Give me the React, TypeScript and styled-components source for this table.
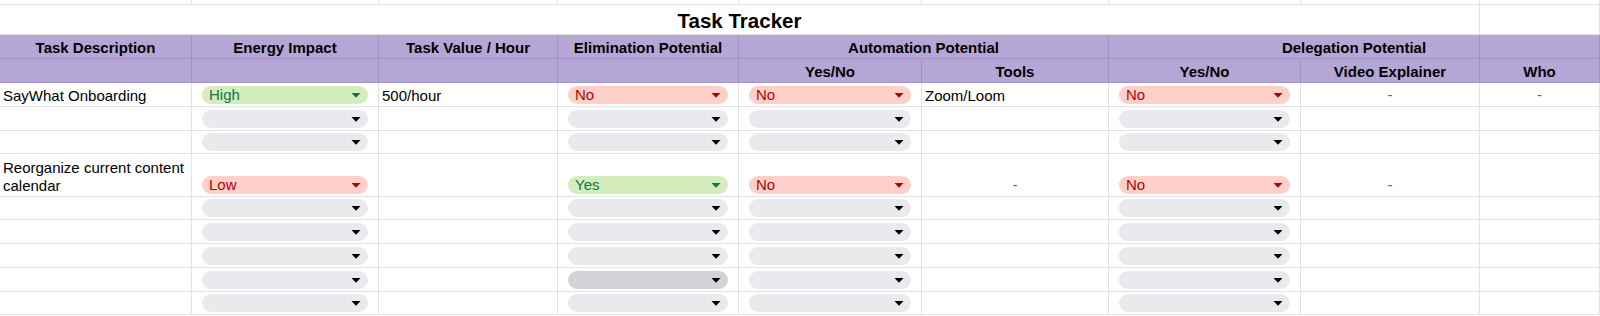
import React from 'react';
import styled, { createGlobalStyle, css } from 'styled-components';

type Tone = 'green' | 'red' | 'gray' | 'hover';
type Kind = 'blank' | 'title' | 'head' | 'data' | 'dash' | 'chip';

type CellData = {
  text?: string;
  chip?: Tone;
  dash?: boolean;
};

const Global = createGlobalStyle`
  html, body { margin: 0; padding: 0; background: #fff; }
  body { font-family: "Liberation Sans", Arial, sans-serif; }
`;

const widths = [192, 187, 179, 181, 183, 187, 192, 179];
const rowHeights = [5, 30, 24, 24, 24, 24, 23, 43, 23, 24, 24, 24, 23];

const Sheet = styled.div`
  display: grid;
  grid-template-columns: ${widths.map(w => `${w}px`).join(' ')} 1fr;
  grid-template-rows: ${rowHeights.map(h => `${h}px`).join(' ')};
  width: 1600px;
  overflow: hidden;
`;

const tones = {
  green: { bg: '#d4edbc', fg: '#11734b' },
  red: { bg: '#ffcfc9', fg: '#b10202' },
  gray: { bg: '#e8eaed', fg: '#000' },
  hover: { bg: '#d1d3d7', fg: '#000' },
};

const Cell = styled.div<{ $kind: Kind; $span?: number; $center?: boolean; $splitAt?: number }>`
  box-sizing: border-box;
  min-width: 0;
  display: flex;
  align-items: flex-end;
  justify-content: ${p => (p.$center ? 'center' : 'flex-start')};
  text-align: ${p => (p.$center ? 'center' : 'left')};
  grid-column: span ${p => p.$span ?? 1};
  border-right: 1px solid #e2e2e2;
  border-bottom: 1px solid #e2e2e2;
  padding: 0 3px 1.5px;
  font-size: 15px;
  line-height: 18px;
  color: #000;
  overflow: hidden;

  ${p => p.$kind === 'title' && css`
    font-size: 20.5px;
    line-height: 24px;
    font-weight: 700;
    padding-bottom: 1px;
  `}

  ${p => p.$kind === 'head' && css`
    background: #b4a7d6;
    border-color: #a093c6;
    font-weight: 700;
    padding-bottom: 1px;
    white-space: nowrap;
  `}

  ${p => p.$kind === 'head' && p.$splitAt !== undefined && css`
    background: linear-gradient(
        to right,
        transparent ${p.$splitAt - 1}px,
        #a093c6 ${p.$splitAt - 1}px,
        #a093c6 ${p.$splitAt}px,
        transparent ${p.$splitAt}px
      ),
      #b4a7d6;
  `}

  ${p => p.$kind === 'dash' && css`
    color: #5f6368;
    padding-bottom: 2px;
  `}

  ${p => p.$kind === 'chip' && css`
    padding: 0 10px 2px 10px;
  `}
`;

const Chip = styled.div<{ $tone: Tone }>`
  box-sizing: border-box;
  width: 100%;
  height: 18px;
  border-radius: 9px;
  display: flex;
  align-items: center;
  justify-content: space-between;
  padding: 0 7px 0 7px;
  background: ${p => tones[p.$tone].bg};
  color: ${p => tones[p.$tone].fg};
  font-size: 15px;
  line-height: 18px;
  white-space: nowrap;
`;

const Caret = ({ color }: { color: string }) => (
  <svg width="10" height="5" viewBox="0 0 10 5">
    <polygon points="0.5,0 9.5,0 5,4.8" fill={color} />
  </svg>
);

const G = (label: string): CellData => ({ chip: 'green', text: label });
const R = (label: string): CellData => ({ chip: 'red', text: label });
const E: CellData = { chip: 'gray' };
const D: CellData = { dash: true };
const T = (text: string): CellData => ({ text });
const B: CellData = {};

const emptyRow = (elim: CellData = E): CellData[] => [B, E, B, elim, E, B, E, B, B];

const dataRows: CellData[][] = [
  [T('SayWhat Onboarding'), G('High'), T('500/hour'), R('No'), R('No'), T('Zoom/Loom'), R('No'), D, D],
  emptyRow(),
  emptyRow(),
  [T('Reorganize current content calendar'), R('Low'), B, G('Yes'), R('No'), D, R('No'), D, B],
  emptyRow(),
  emptyRow(),
  emptyRow(),
  emptyRow({ chip: 'hover' }),
  emptyRow(),
];

const DataCell = ({ cell }: { cell: CellData }) => {
  if (cell.chip) {
    return (
      <Cell $kind="chip">
        <Chip $tone={cell.chip}>
          <span>{cell.text ?? ''}</span>
          <Caret color={tones[cell.chip].fg} />
        </Chip>
      </Cell>
    );
  }
  if (cell.dash) {
    return (
      <Cell $kind="dash" $center>
        -
      </Cell>
    );
  }
  return <Cell $kind="data">{cell.text ?? ''}</Cell>;
};

export default function App() {
  return (
    <>
      <Global />
      <Sheet>
        {widths.concat([0]).map((_, i) => (
          <Cell key={`top-${i}`} $kind="blank" />
        ))}

        <Cell $kind="title" $span={8} $center>
          Task Tracker
        </Cell>
        <Cell $kind="blank" />

        <Cell $kind="head" $center>Task Description</Cell>
        <Cell $kind="head" $center>Energy Impact</Cell>
        <Cell $kind="head" $center>Task Value / Hour</Cell>
        <Cell $kind="head" $center>Elimination Potential</Cell>
        <Cell $kind="head" $center $span={2}>Automation Potential</Cell>
        <Cell $kind="head" $center $span={3} $splitAt={371}>Delegation Potential</Cell>

        <Cell $kind="head" />
        <Cell $kind="head" />
        <Cell $kind="head" />
        <Cell $kind="head" />
        <Cell $kind="head" $center>Yes/No</Cell>
        <Cell $kind="head" $center>Tools</Cell>
        <Cell $kind="head" $center>Yes/No</Cell>
        <Cell $kind="head" $center>Video Explainer</Cell>
        <Cell $kind="head" $center>Who</Cell>

        {dataRows.map((row, r) =>
          row.map((cell, c) => <DataCell key={`${r}-${c}`} cell={cell} />)
        )}
      </Sheet>
    </>
  );
}
